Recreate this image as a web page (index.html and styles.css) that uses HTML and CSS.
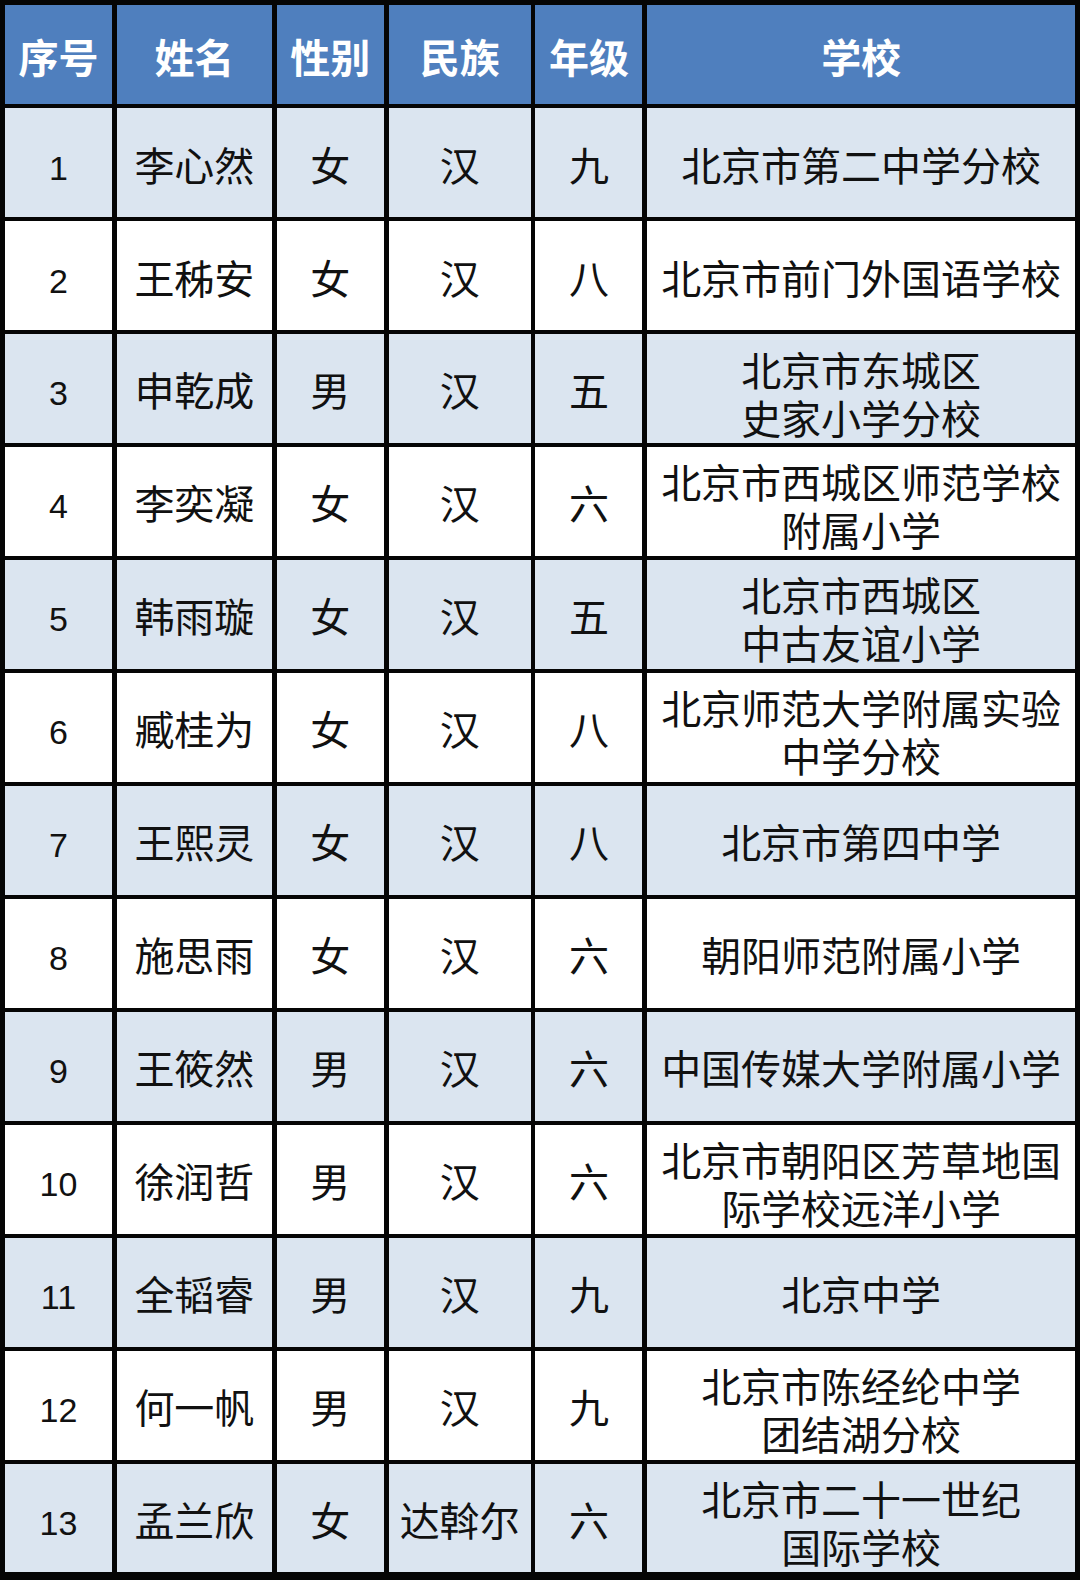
FILE: index.html
```html
<!DOCTYPE html>
<html lang="zh-CN">
<head>
<meta charset="utf-8">
<title>名单</title>
<link rel="stylesheet" href="styles.css">
</head>
<body>
<div class="table">
  <div class="cell head">序号</div><div class="cell head">姓名</div><div class="cell head">性别</div><div class="cell head">民族</div><div class="cell head">年级</div><div class="cell head">学校</div>

  <div class="cell alt num">1</div><div class="cell alt">李心然</div><div class="cell alt">女</div><div class="cell alt">汉</div><div class="cell alt">九</div><div class="cell alt">北京市第二中学分校</div>

  <div class="cell num">2</div><div class="cell">王秭安</div><div class="cell">女</div><div class="cell">汉</div><div class="cell">八</div><div class="cell">北京市前门外国语学校</div>

  <div class="cell alt num">3</div><div class="cell alt">申乾成</div><div class="cell alt">男</div><div class="cell alt">汉</div><div class="cell alt">五</div><div class="cell alt two">北京市东城区<br>史家小学分校</div>

  <div class="cell num">4</div><div class="cell">李奕凝</div><div class="cell">女</div><div class="cell">汉</div><div class="cell">六</div><div class="cell two">北京市西城区师范学校<br>附属小学</div>

  <div class="cell alt num">5</div><div class="cell alt">韩雨璇</div><div class="cell alt">女</div><div class="cell alt">汉</div><div class="cell alt">五</div><div class="cell alt two">北京市西城区<br>中古友谊小学</div>

  <div class="cell num">6</div><div class="cell">臧桂为</div><div class="cell">女</div><div class="cell">汉</div><div class="cell">八</div><div class="cell two">北京师范大学附属实验<br>中学分校</div>

  <div class="cell alt num">7</div><div class="cell alt">王熙灵</div><div class="cell alt">女</div><div class="cell alt">汉</div><div class="cell alt">八</div><div class="cell alt">北京市第四中学</div>

  <div class="cell num">8</div><div class="cell">施思雨</div><div class="cell">女</div><div class="cell">汉</div><div class="cell">六</div><div class="cell">朝阳师范附属小学</div>

  <div class="cell alt num">9</div><div class="cell alt">王筱然</div><div class="cell alt">男</div><div class="cell alt">汉</div><div class="cell alt">六</div><div class="cell alt">中国传媒大学附属小学</div>

  <div class="cell num">10</div><div class="cell">徐润哲</div><div class="cell">男</div><div class="cell">汉</div><div class="cell">六</div><div class="cell two">北京市朝阳区芳草地国<br>际学校远洋小学</div>

  <div class="cell alt num">11</div><div class="cell alt">全韬睿</div><div class="cell alt">男</div><div class="cell alt">汉</div><div class="cell alt">九</div><div class="cell alt">北京中学</div>

  <div class="cell num">12</div><div class="cell">何一帆</div><div class="cell">男</div><div class="cell">汉</div><div class="cell">九</div><div class="cell two">北京市陈经纶中学<br>团结湖分校</div>

  <div class="cell alt num">13</div><div class="cell alt">孟兰欣</div><div class="cell alt">女</div><div class="cell alt">达斡尔</div><div class="cell alt">六</div><div class="cell alt two">北京市二十一世纪<br>国际学校</div>
</div>
</body>
</html>
```

FILE: styles.css
```css
html, body {
  margin: 0;
  padding: 0;
  background: #000;
}

.table {
  width: 1080px;
  height: 1580px;
  box-sizing: border-box;
  background: #050505;
  display: grid;
  grid-template-columns: 107.5px 155px 107.5px 142px 107px 428px;
  grid-template-rows: 99px repeat(13, 108.3px);
  gap: 4.7px;
  padding: 4.7px 4.7px 7.3px 4.7px;
  font-family: "Liberation Sans", "Noto Sans CJK SC", sans-serif;
  font-size: 40px;
  color: #111;
}

.cell {
  display: flex;
  align-items: center;
  justify-content: center;
  text-align: center;
  background: #ffffff;
  line-height: 48px;
  white-space: nowrap;
  padding-top: 8px;
  box-sizing: border-box;
}

.cell.alt {
  background: #dbe5f0;
}

.cell.head {
  background: #4f7fbe;
  color: #ffffff;
  font-weight: 700;
  padding-top: 9px;
}

.cell.num {
  font-size: 34px;
  padding-top: 10px;
}

.cell.two {
  padding-top: 14px;
}
```
